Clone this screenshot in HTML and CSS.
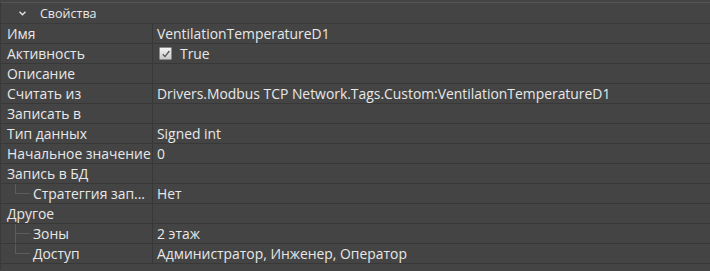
FILE: index.html
```html
<!DOCTYPE html>
<html lang="ru">
<head>
    <meta charset="UTF-8">
    <title>Свойства</title>
    <link rel="stylesheet" href="styles.css">
</head>
<body>
    <div class="grid">
        <div class="category">
            <span class="arrow">
                <svg width="7" height="5" viewBox="0 0 7 5"><path d="M0.5 0.8 L3.5 3.8 L6.5 0.8" fill="none" stroke="#e0e0e0" stroke-width="1.4"/></svg>
            </span>
            <span>Свойства</span>
        </div>

        <div class="row"><div class="name">Имя</div><div class="value">VentilationTemperatureD1</div></div>
        <div class="row">
            <div class="name">Активность</div>
            <div class="value">
                <span class="check">
                    <svg width="10" height="10" viewBox="0 0 10 10"><path d="M1.8 5.2 L4 7.6 L8.4 2" fill="none" stroke="#555" stroke-width="1.3"/></svg>
                </span>
                True
            </div>
        </div>
        <div class="row"><div class="name">Описание</div><div class="value"></div></div>
        <div class="row"><div class="name">Считать из</div><div class="value">Drivers.Modbus TCP Network.Tags.Custom:VentilationTemperatureD1</div></div>
        <div class="row"><div class="name">Записать в</div><div class="value"></div></div>
        <div class="row"><div class="name">Тип данных</div><div class="value">Signed int</div></div>
        <div class="row"><div class="name">Начальное значение</div><div class="value">0</div></div>
        <div class="row"><div class="name">Запись в БД</div><div class="value"></div></div>
        <div class="row child last"><div class="name"><span class="tree"></span>Стратеггия зап...</div><div class="value">Нет</div></div>
        <div class="row"><div class="name">Другое</div><div class="value"></div></div>
        <div class="row child"><div class="name"><span class="tree"></span>Зоны</div><div class="value">2 этаж</div></div>
        <div class="row child last"><div class="name"><span class="tree"></span>Доступ</div><div class="value">Администратор, Инженер, Оператор</div></div>
    </div>
</body>
</html>
```

FILE: styles.css
```css
body {
    margin: 0;
    background: #444444;
    font-family: 'Open Sans', 'Noto Sans', sans-serif;
    font-size: 13.9px;
    color: #e8e8e8;
}

.grid {
    border-top: 1px solid #555555;
    margin-top: 2px;
    border-left: 1px solid #3a3a3a;
    height: 268px;
    box-sizing: border-box;
}

/* Category header */
.category {
    height: 21px;
    box-sizing: border-box;
    display: flex;
    align-items: center;
    border-bottom: 1px solid #3a3a3a;
    font-size: 12.5px;
}

.arrow {
    width: 39px;
    display: flex;
    justify-content: center;
    padding-left: 3px;
    box-sizing: border-box;
}

/* Property rows */
.row {
    display: flex;
    height: 20px;
    box-sizing: border-box;
    border-bottom: 1px solid #383838;
}

.name {
    width: 152px;
    padding-left: 6px;
    box-sizing: border-box;
    border-right: 1px solid #383838;
    display: flex;
    align-items: center;
    white-space: nowrap;
    overflow: hidden;
    position: relative;
}

.value {
    flex: 1;
    padding-left: 4px;
    display: flex;
    align-items: center;
    white-space: nowrap;
}

.child .name {
    padding-left: 32px;
}

.tree {
    position: absolute;
    left: 14px;
    top: -1px;
    width: 14px;
    height: 10px;
    border-left: 1px solid #5c5c5c;
    border-bottom: 1px solid #5c5c5c;
}

.child:not(.last) .tree::after {
    content: "";
    position: absolute;
    left: -1px;
    top: 10px;
    height: 10px;
    border-left: 1px solid #5c5c5c;
}

.check {
    width: 11px;
    height: 11px;
    margin: 0 8px 0 2px;
    border: 1px solid #8a8a8a;
    border-radius: 1px;
    background: linear-gradient(#f4f4f4, #c9c9c9);
    display: flex;
    align-items: center;
    justify-content: center;
}
```
